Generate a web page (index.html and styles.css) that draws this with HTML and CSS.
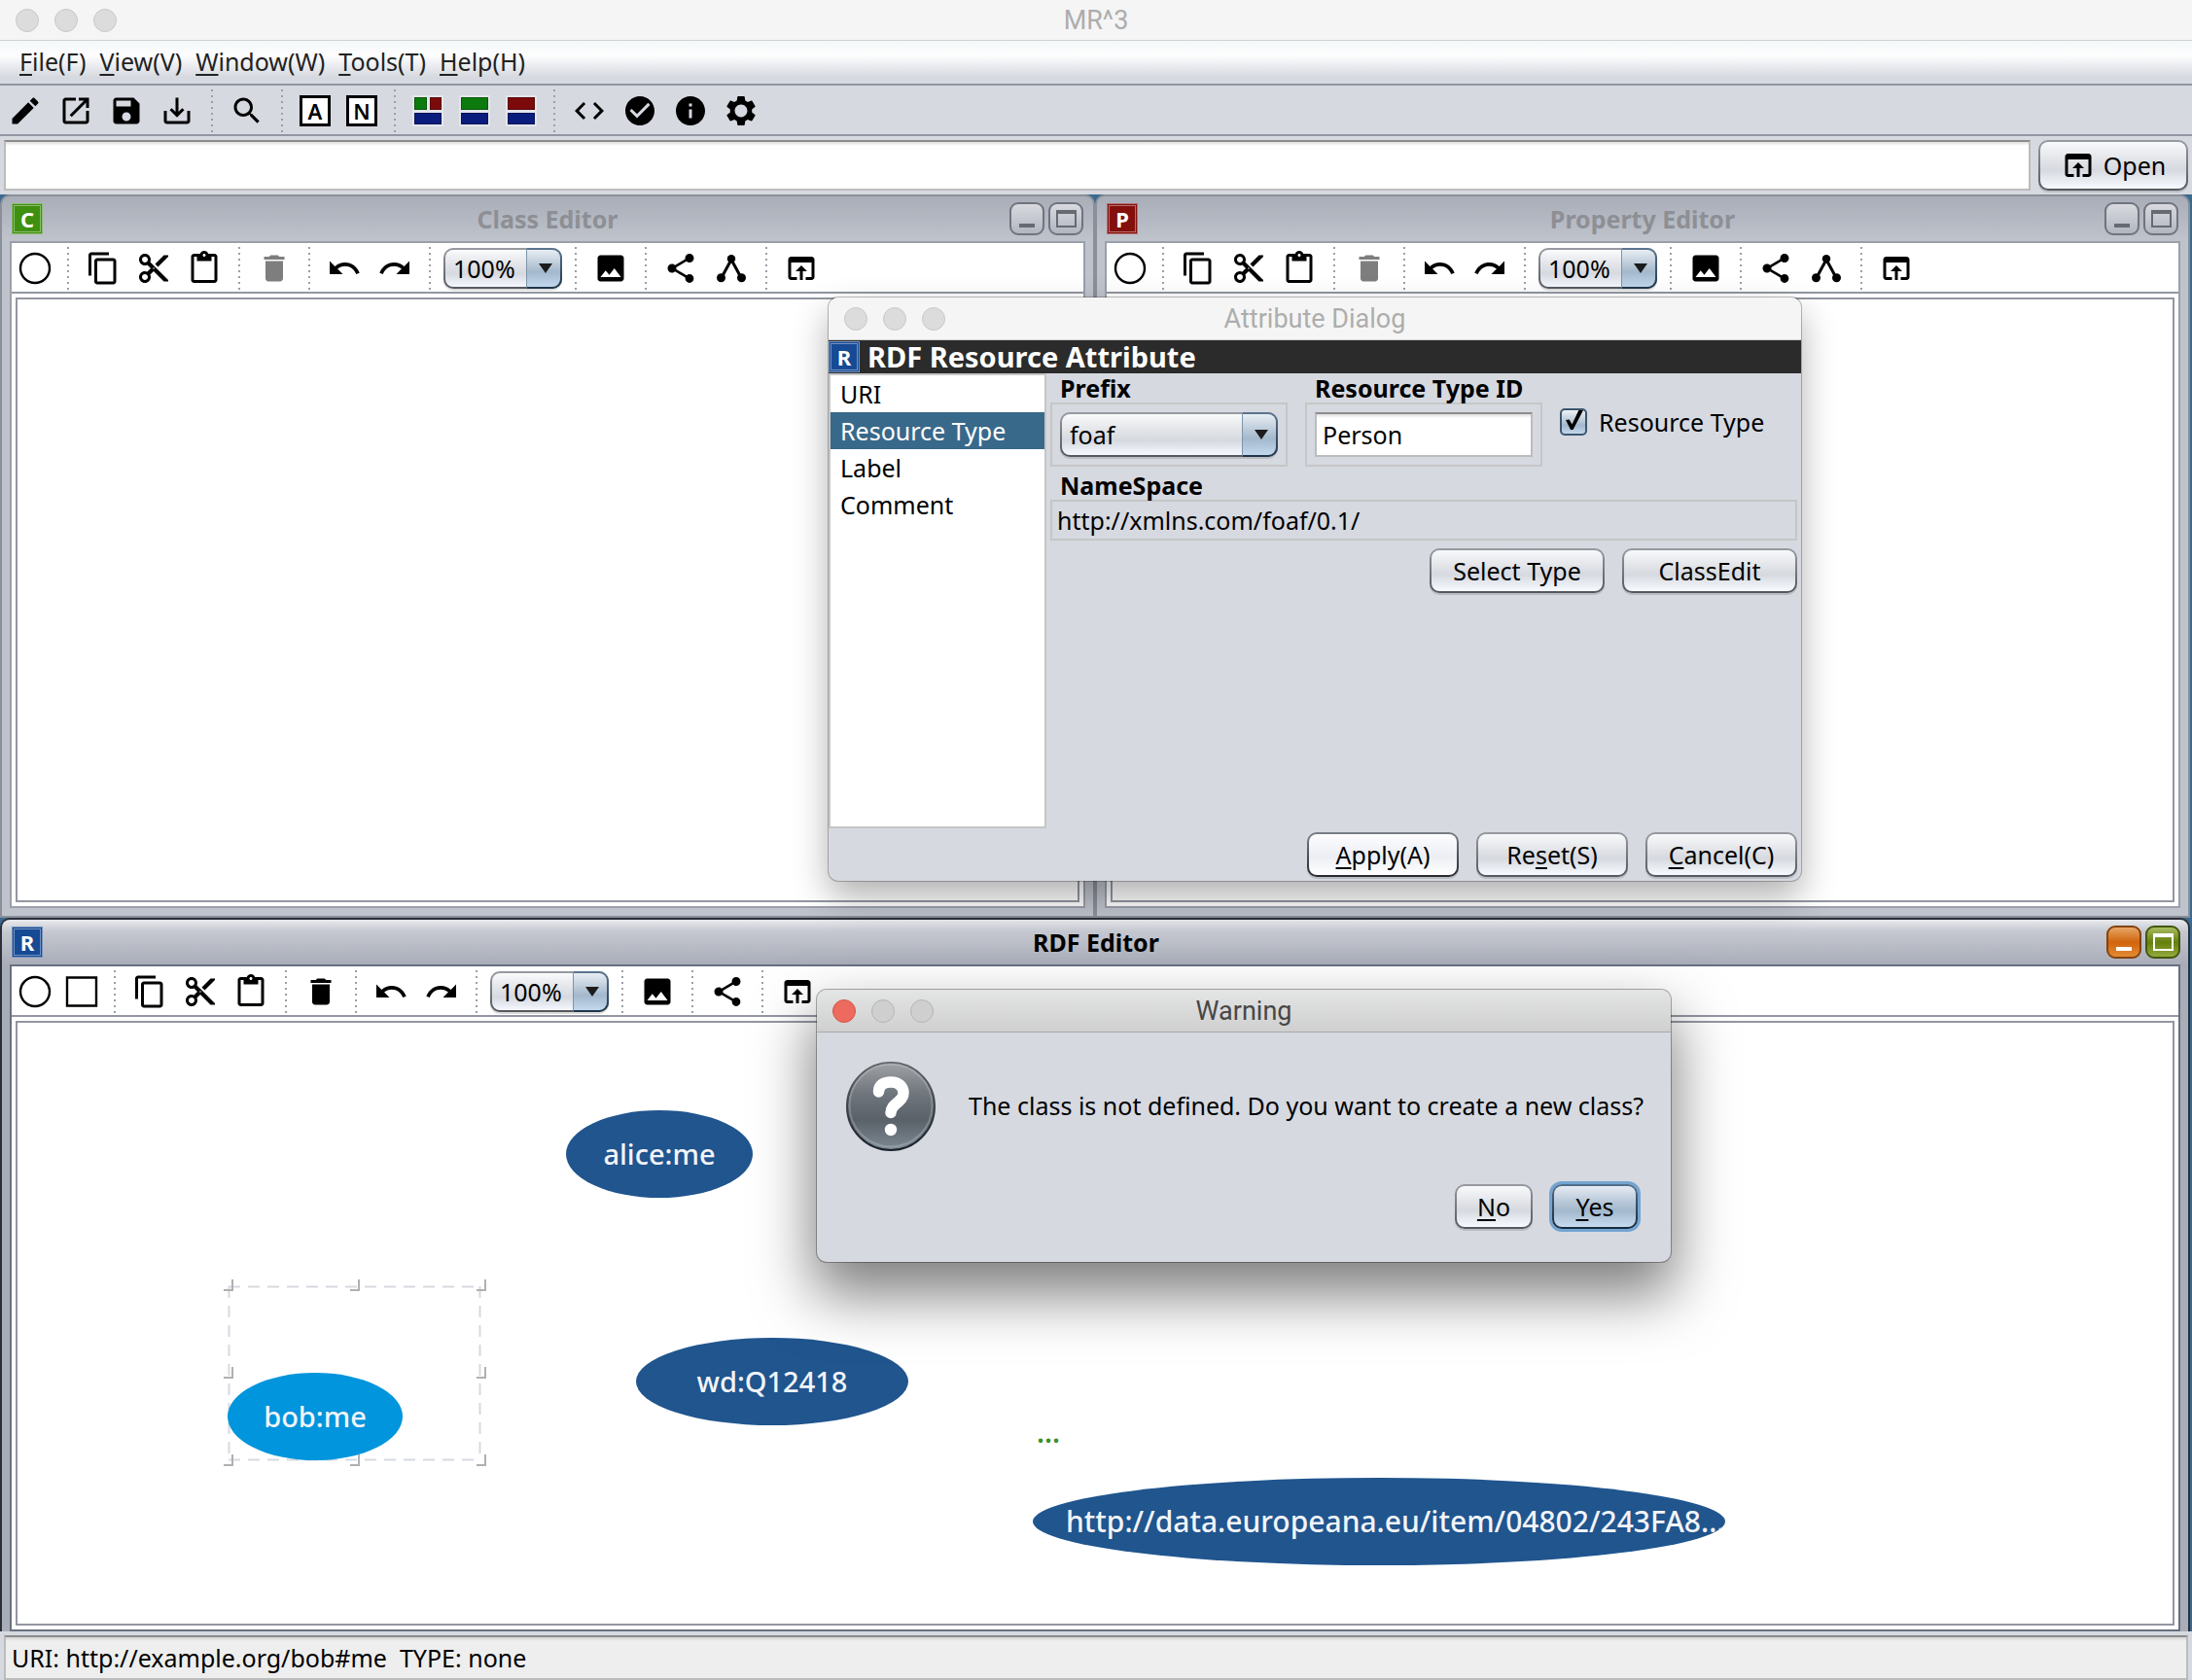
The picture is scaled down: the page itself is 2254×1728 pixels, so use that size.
FILE: index.html
```html
<!DOCTYPE html>
<html lang="en">
<head>
<meta charset="utf-8">
<title>MR^3</title>
<link rel="stylesheet" href="styles.css">
</head>
<body>
<svg class="sprite" aria-hidden="true">
  <symbol id="i-edit" viewBox="0 0 24 24"><path d="M3 17.25V21h3.75L17.81 9.94l-3.75-3.75L3 17.25zM20.71 7.04c.39-.39.39-1.02 0-1.41l-2.34-2.34c-.39-.39-1.02-.39-1.41 0l-1.83 1.83 3.75 3.75 1.83-1.83z"/></symbol>
  <symbol id="i-launch" viewBox="0 0 24 24"><path d="M19 19H5V5h7V3H5c-1.11 0-2 .9-2 2v14c0 1.1.89 2 2 2h14c1.1 0 2-.9 2-2v-7h-2v7zM14 3v2h3.59l-9.83 9.83 1.41 1.41L19 6.41V10h2V3h-7z"/></symbol>
  <symbol id="i-save" viewBox="0 0 24 24"><path d="M17 3H5c-1.11 0-2 .9-2 2v14c0 1.1.89 2 2 2h14c1.1 0 2-.9 2-2V7l-4-4zm-5 16c-1.66 0-3-1.34-3-3s1.34-3 3-3 3 1.34 3 3-1.34 3-3 3zm3-10H5V5h10v4z"/></symbol>
  <symbol id="i-export" viewBox="0 0 24 24"><path d="M19 12v7H5v-7H3v7c0 1.1.9 2 2 2h14c1.1 0 2-.9 2-2v-7h-2zm-6 .67l2.59-2.58L17 11.5l-5 5-5-5 1.41-1.41L11 12.67V3h2z"/></symbol>
  <symbol id="i-search" viewBox="0 0 24 24"><path d="M15.5 14h-.79l-.28-.27C15.41 12.59 16 11.11 16 9.5 16 5.91 13.09 3 9.5 3S3 5.91 3 9.5 5.91 16 9.5 16c1.61 0 3.09-.59 4.23-1.57l.27.28v.79l5 4.99L20.49 19l-4.99-5zm-6 0C7.01 14 5 11.99 5 9.5S7.01 5 9.5 5 14 7.01 14 9.5 11.99 14 9.5 14z"/></symbol>
  <symbol id="i-code" viewBox="0 0 24 24"><path d="M9.4 16.6L4.8 12l4.6-4.6L8 6l-6 6 6 6 1.4-1.4zm5.2 0l4.6-4.6-4.6-4.6L16 6l6 6-6 6-1.4-1.4z"/></symbol>
  <symbol id="i-check" viewBox="0 0 24 24"><path d="M12 2C6.48 2 2 6.48 2 12s4.48 10 10 10 10-4.48 10-10S17.52 2 12 2zm-2 15l-5-5 1.41-1.41L10 14.17l7.59-7.59L19 8l-9 9z"/></symbol>
  <symbol id="i-info" viewBox="0 0 24 24"><path d="M12 2C6.48 2 2 6.48 2 12s4.48 10 10 10 10-4.48 10-10S17.52 2 12 2zm1 15h-2v-6h2v6zm0-8h-2V7h2v2z"/></symbol>
  <symbol id="i-gear" viewBox="0 0 24 24"><path d="M19.43 12.98c.04-.32.07-.64.07-.98s-.03-.66-.07-.98l2.11-1.65c.19-.15.24-.42.12-.64l-2-3.46c-.12-.22-.39-.3-.61-.22l-2.49 1c-.52-.4-1.08-.73-1.69-.98l-.38-2.65C14.46 2.18 14.25 2 14 2h-4c-.25 0-.46.18-.49.42l-.38 2.65c-.61.25-1.17.59-1.69.98l-2.49-1c-.23-.09-.49 0-.61.22l-2 3.46c-.13.22-.07.49.12.64l2.11 1.65c-.04.32-.07.65-.07.98s.03.66.07.98l-2.11 1.65c-.19.15-.24.42-.12.64l2 3.46c.12.22.39.3.61.22l2.49-1c.52.4 1.08.73 1.69.98l.38 2.65c.03.24.24.42.49.42h4c.25 0 .46-.18.49-.42l.38-2.65c.61-.25 1.17-.59 1.69-.98l2.49 1c.23.09.49 0 .61-.22l2-3.46c.12-.22.07-.49-.12-.64l-2.11-1.65zM12 16.300c-2.370 0-4.300-1.930-4.300-4.300s1.930-4.300 4.300-4.300 4.300 1.930 4.300 4.300-1.930 4.300-4.300 4.300z"/></symbol>
  <symbol id="i-circle" viewBox="0 0 36 36"><circle cx="18" cy="18" r="15" fill="#fff" stroke="#000" stroke-width="2.4"/></symbol>
  <symbol id="i-square" viewBox="0 0 36 36"><path d="M3 3.500h30v29H3z" fill="#fff" stroke="#000" stroke-width="2.4"/></symbol>
  <symbol id="i-copy" viewBox="0 0 24 24"><path d="M16 1H4c-1.1 0-2 .9-2 2v14h2V3h12V1zm3 4H8c-1.1 0-2 .9-2 2v14c0 1.1.9 2 2 2h11c1.100 0 2-.9 2-2V7c0-1.100-.9-2-2-2zm0 16H8V7h11v14z"/></symbol>
  <symbol id="i-cut" viewBox="0 0 24 24"><path d="M9.64 7.64c.23-.5.36-1.05.36-1.64 0-2.21-1.79-4-4-4S2 3.79 2 6s1.79 4 4 4c.59 0 1.140-.13 1.640-.36L10 12l-2.360 2.360C7.140 14.130 6.590 14 6 14c-2.210 0-4 1.790-4 4s1.790 4 4 4 4-1.790 4-4c0-.59-.13-1.140-.36-1.640L12 14l7 7h3v-1L9.640 7.640zM6 8c-1.100 0-2-.89-2-2s.9-2 2-2 2 .89 2 2-.9 2-2 2zm0 12c-1.100 0-2-.89-2-2s.9-2 2-2 2 .89 2 2-.9 2-2 2zm6-7.500c-.28 0-.5-.22-.5-.5s.22-.5.5-.5.5.22.5.5-.22.5-.5.5zM19 3l-6 6 2 2 7-7V3z"/></symbol>
  <symbol id="i-paste" viewBox="0 0 24 24"><path d="M19 2h-4.180C14.400.84 13.300 0 12 0c-1.300 0-2.400.84-2.820 2H5c-1.100 0-2 .9-2 2v16c0 1.100.9 2 2 2h14c1.100 0 2-.9 2-2V4c0-1.100-.9-2-2-2zm-7 0c.55 0 1 .45 1 1s-.45 1-1 1-1-.45-1-1 .45-1 1-1zm7 18H5V4h2v3h10V4h2v16z"/></symbol>
  <symbol id="i-trash" viewBox="0 0 24 24"><path d="M6 19c0 1.100.9 2 2 2h8c1.100 0 2-.9 2-2V7H6v12zM19 4h-3.500l-1-1h-5l-1 1H5v2h14V4z"/></symbol>
  <symbol id="i-undo" viewBox="0 0 24 24"><path d="M12.500 8c-2.650 0-5.050.99-6.900 2.600L2 7v9h9l-3.620-3.620c1.390-1.160 3.160-1.880 5.120-1.880 3.540 0 6.550 2.310 7.600 5.500l2.370-.78C21.080 11.030 17.150 8 12.500 8z"/></symbol>
  <symbol id="i-redo" viewBox="0 0 24 24"><path d="M18.400 10.600C16.550 8.990 14.150 8 11.500 8c-4.650 0-8.580 3.030-9.960 7.220L3.900 16c1.050-3.190 4.050-5.500 7.600-5.500 1.950 0 3.730.72 5.120 1.880L13 16h9V7l-3.600 3.600z"/></symbol>
  <symbol id="i-image" viewBox="0 0 24 24"><path d="M21 19V5c0-1.100-.9-2-2-2H5c-1.100 0-2 .9-2 2v14c0 1.100.9 2 2 2h14c1.100 0 2-.9 2-2zM8.500 13.500l2.500 3.010L14.500 12l4.500 6H5l3.500-4.500z"/></symbol>
  <symbol id="i-share" viewBox="0 0 24 24"><path d="M18 16.080c-.76 0-1.440.3-1.960.77L8.910 12.700c.05-.23.09-.46.09-.7s-.04-.47-.09-.7l7.050-4.110c.54.5 1.250.81 2.040.81 1.660 0 3-1.340 3-3s-1.340-3-3-3-3 1.340-3 3c0 .24.04.47.09.7L8.040 9.810C7.500 9.310 6.790 9 6 9c-1.660 0-3 1.340-3 3s1.340 3 3 3c.79 0 1.500-.31 2.040-.81l7.120 4.160c-.05.21-.08.43-.08.65 0 1.610 1.310 2.920 2.920 2.920 1.610 0 2.920-1.310 2.920-2.920s-1.310-2.920-2.920-2.920z"/></symbol>
  <symbol id="i-tree" viewBox="0 0 24 24"><path d="M12 6 5.500 18M12 6l6.500 12" stroke="#000" stroke-width="2"/><circle cx="12" cy="5.500" r="2.800"/><circle cx="5" cy="18.500" r="3"/><circle cx="19" cy="18.500" r="3"/></symbol>
  <symbol id="i-browser" viewBox="0 0 24 24"><path d="M19 4H5c-1.110 0-2 .9-2 2v12c0 1.100.89 2 2 2h4v-2H5V8h14v10h-4v2h4c1.100 0 2-.9 2-2V6c0-1.100-.89-2-2-2zm-7 6l-4 4h3v6h2v-6h3l-4-4z"/></symbol>
  <symbol id="i-min" viewBox="0 0 36 34"><path d="M10 22h16v4H10z"/></symbol>
  <symbol id="i-max" viewBox="0 0 36 34"><path d="M8 8h21v18H8zm2 4v12h17V12z" fill-rule="evenodd"/></symbol>
</svg>

<header class="titlebar">
  <div class="lights"><i></i><i></i><i></i></div>
  <h1 class="titlebar-text">MR^3</h1>
</header>

<nav class="menubar" aria-label="Main menu">
  <button class="menu"><u>F</u>ile(F)</button>
  <button class="menu"><u>V</u>iew(V)</button>
  <button class="menu"><u>W</u>indow(W)</button>
  <button class="menu"><u>T</u>ools(T)</button>
  <button class="menu"><u>H</u>elp(H)</button>
</nav>

<div class="toolbar toolbar-main" role="toolbar" aria-label="Main tools">
  <button class="tool" aria-label="New"><svg><use href="#i-edit"/></svg></button>
  <button class="tool" aria-label="Open"><svg><use href="#i-launch"/></svg></button>
  <button class="tool" aria-label="Save"><svg><use href="#i-save"/></svg></button>
  <button class="tool" aria-label="Export"><svg><use href="#i-export"/></svg></button>
  <span class="sep"></span>
  <button class="tool" aria-label="Find"><svg><use href="#i-search"/></svg></button>
  <span class="sep"></span>
  <button class="tool tool-narrow"><span class="letter">A</span></button>
  <button class="tool tool-narrow"><span class="letter">N</span></button>
  <span class="sep"></span>
  <button class="tool tool-narrow" aria-label="All editors"><span class="layout"><i class="g"></i><i class="r"></i><i class="b wide"></i></span></button>
  <button class="tool tool-narrow" aria-label="Class and RDF editors"><span class="layout"><i class="g wide"></i><i class="b wide"></i></span></button>
  <button class="tool tool-narrow" aria-label="Property and RDF editors"><span class="layout"><i class="r wide"></i><i class="b wide"></i></span></button>
  <span class="sep"></span>
  <button class="tool" aria-label="Source"><svg><use href="#i-code"/></svg></button>
  <button class="tool" aria-label="Validate"><svg><use href="#i-check"/></svg></button>
  <button class="tool" aria-label="Info"><svg><use href="#i-info"/></svg></button>
  <button class="tool" aria-label="Settings"><svg><use href="#i-gear"/></svg></button>
</div>

<form class="address">
  <input class="field address-input" type="text" aria-label="Address">
  <button class="btn btn-open" type="button"><svg class="icon"><use href="#i-browser"/></svg>Open</button>
</form>

<main class="desktop">
  <section class="frame">
    <header class="frame-title">
      <span class="badge badge-c">C</span>
      <h2 class="frame-name">Class Editor</h2>
      <div class="winbtns">
        <button class="winbtn" aria-label="Minimize"><svg><use href="#i-min"/></svg></button>
        <button class="winbtn" aria-label="Maximize"><svg><use href="#i-max"/></svg></button>
      </div>
    </header>
    <div class="frame-body">
      <div class="toolbar" role="toolbar" aria-label="Class tools">
        <button class="tool tool-narrow" aria-label="Insert class"><svg><use href="#i-circle"/></svg></button>
        <span class="sep"></span>
        <button class="tool" aria-label="Copy"><svg><use href="#i-copy"/></svg></button>
        <button class="tool" aria-label="Cut"><svg><use href="#i-cut"/></svg></button>
        <button class="tool" aria-label="Paste"><svg><use href="#i-paste"/></svg></button>
        <span class="sep"></span>
        <button class="tool" aria-label="Delete" disabled><svg><use href="#i-trash"/></svg></button>
        <span class="sep"></span>
        <button class="tool" aria-label="Undo"><svg><use href="#i-undo"/></svg></button>
        <button class="tool" aria-label="Redo"><svg><use href="#i-redo"/></svg></button>
        <span class="sep"></span>
        <span class="combo combo-zoom"><select aria-label="Zoom"><option>100%</option></select></span>
        <span class="sep"></span>
        <button class="tool" aria-label="Save image"><svg><use href="#i-image"/></svg></button>
        <span class="sep"></span>
        <button class="tool" aria-label="Layout left to right"><svg><use href="#i-share"/></svg></button>
        <button class="tool" aria-label="Layout top to bottom"><svg><use href="#i-tree"/></svg></button>
        <span class="sep"></span>
        <button class="tool" aria-label="Show attributes"><svg><use href="#i-browser"/></svg></button>
      </div>
      <div class="canvas"></div>
    </div>
  </section>

  <section class="frame">
    <header class="frame-title">
      <span class="badge badge-p">P</span>
      <h2 class="frame-name">Property Editor</h2>
      <div class="winbtns">
        <button class="winbtn" aria-label="Minimize"><svg><use href="#i-min"/></svg></button>
        <button class="winbtn" aria-label="Maximize"><svg><use href="#i-max"/></svg></button>
      </div>
    </header>
    <div class="frame-body">
      <div class="toolbar" role="toolbar" aria-label="Property tools">
        <button class="tool tool-narrow" aria-label="Insert property"><svg><use href="#i-circle"/></svg></button>
        <span class="sep"></span>
        <button class="tool" aria-label="Copy"><svg><use href="#i-copy"/></svg></button>
        <button class="tool" aria-label="Cut"><svg><use href="#i-cut"/></svg></button>
        <button class="tool" aria-label="Paste"><svg><use href="#i-paste"/></svg></button>
        <span class="sep"></span>
        <button class="tool" aria-label="Delete" disabled><svg><use href="#i-trash"/></svg></button>
        <span class="sep"></span>
        <button class="tool" aria-label="Undo"><svg><use href="#i-undo"/></svg></button>
        <button class="tool" aria-label="Redo"><svg><use href="#i-redo"/></svg></button>
        <span class="sep"></span>
        <span class="combo combo-zoom"><select aria-label="Zoom"><option>100%</option></select></span>
        <span class="sep"></span>
        <button class="tool" aria-label="Save image"><svg><use href="#i-image"/></svg></button>
        <span class="sep"></span>
        <button class="tool" aria-label="Layout left to right"><svg><use href="#i-share"/></svg></button>
        <button class="tool" aria-label="Layout top to bottom"><svg><use href="#i-tree"/></svg></button>
        <span class="sep"></span>
        <button class="tool" aria-label="Show attributes"><svg><use href="#i-browser"/></svg></button>
      </div>
      <div class="canvas"></div>
    </div>
  </section>

  <section class="frame frame-active">
    <header class="frame-title">
      <span class="badge badge-r">R</span>
      <h2 class="frame-name">RDF Editor</h2>
      <div class="winbtns">
        <button class="winbtn winbtn-orange" aria-label="Minimize"><svg><use href="#i-min"/></svg></button>
        <button class="winbtn winbtn-green" aria-label="Maximize"><svg><use href="#i-max"/></svg></button>
      </div>
    </header>
    <div class="frame-body">
      <div class="toolbar" role="toolbar" aria-label="RDF tools">
        <button class="tool tool-narrow" aria-label="Insert resource"><svg><use href="#i-circle"/></svg></button>
        <button class="tool tool-narrow" aria-label="Insert literal"><svg><use href="#i-square"/></svg></button>
        <span class="sep"></span>
        <button class="tool" aria-label="Copy"><svg><use href="#i-copy"/></svg></button>
        <button class="tool" aria-label="Cut"><svg><use href="#i-cut"/></svg></button>
        <button class="tool" aria-label="Paste"><svg><use href="#i-paste"/></svg></button>
        <span class="sep"></span>
        <button class="tool" aria-label="Delete"><svg><use href="#i-trash"/></svg></button>
        <span class="sep"></span>
        <button class="tool" aria-label="Undo"><svg><use href="#i-undo"/></svg></button>
        <button class="tool" aria-label="Redo"><svg><use href="#i-redo"/></svg></button>
        <span class="sep"></span>
        <span class="combo combo-zoom"><select aria-label="Zoom"><option>100%</option></select></span>
        <span class="sep"></span>
        <button class="tool" aria-label="Save image"><svg><use href="#i-image"/></svg></button>
        <span class="sep"></span>
        <button class="tool" aria-label="Layout left to right"><svg><use href="#i-share"/></svg></button>
        <span class="sep"></span>
        <button class="tool" aria-label="Show attributes"><svg><use href="#i-browser"/></svg></button>
      </div>
      <div class="canvas">
        <svg class="selection" viewBox="0 0 270 192" aria-hidden="true">
          <path d="M5 7.500h259M5 185.500h259M5.500 7v179M263.500 7v179" stroke="#d6d9e0" stroke-width="2" stroke-dasharray="12 8" fill="none"/>
          <path d="M0 11h9V0M130 11h9V0M260 11h9V0M0 101h9V90M260 101h9V90M0 191h9v-11M260 191h9v-11" stroke="#b0b0b0" stroke-width="2" fill="none"/>
        </svg>
        <div class="node node-alice">alice:me</div>
        <div class="node node-wd">wd:Q12418</div>
        <div class="node node-bob">bob:me</div>
        <svg class="handle" viewBox="0 0 10 12" aria-hidden="true"><path d="M0 11h9V0" stroke="#b0b0b0" stroke-width="2" fill="none"/></svg>
        <div class="node node-item">http://data.europeana.eu/item/04802/243FA8...</div>
        <div class="edge-label">...</div>
      </div>
    </div>
  </section>
</main>

<footer class="statusbar"><output class="status">URI: http://example.org/bob#me&nbsp; TYPE: none</output></footer>

<section class="dialog dialog-attr" role="dialog" aria-label="Attribute Dialog">
  <header class="titlebar">
    <div class="lights"><i></i><i></i><i></i></div>
    <h2 class="titlebar-text">Attribute Dialog</h2>
  </header>
  <h3 class="banner"><span class="badge badge-r">R</span>RDF Resource Attribute</h3>
  <div class="attr-main">
    <ul class="attr-list">
      <li>URI</li>
      <li class="selected">Resource Type</li>
      <li>Label</li>
      <li>Comment</li>
    </ul>
    <form class="attr-form">
      <div class="attr-row">
        <div class="group">
          <label class="caption" for="prefix">Prefix</label>
          <div class="box"><span class="combo"><select id="prefix"><option>foaf</option></select></span></div>
        </div>
        <div class="group">
          <label class="caption" for="type-id">Resource Type ID</label>
          <div class="box"><input class="field" id="type-id" type="text" value="Person"></div>
        </div>
        <label class="check"><input type="checkbox" checked>Resource Type</label>
      </div>
      <div class="group">
        <span class="caption" id="ns-caption">NameSpace</span>
        <output class="namespace" aria-labelledby="ns-caption">http://xmlns.com/foaf/0.1/</output>
      </div>
      <div class="buttons">
        <button class="btn btn-wide" type="button">Select Type</button>
        <button class="btn btn-wide" type="button">ClassEdit</button>
      </div>
    </form>
  </div>
  <footer class="buttons attr-footer">
    <button class="btn btn-mid btn-hot"><span><u>A</u>pply(A)</span></button>
    <button class="btn btn-mid"><span>Re<u>s</u>et(S)</span></button>
    <button class="btn btn-mid"><span><u>C</u>ancel(C)</span></button>
  </footer>
</section>

<section class="dialog dialog-warn" role="alertdialog" aria-label="Warning">
  <header class="titlebar">
    <div class="lights"><i class="red"></i><i></i><i></i></div>
    <h2 class="titlebar-text">Warning</h2>
  </header>
  <div class="message">
    <svg class="question" viewBox="0 0 92 92" aria-hidden="true">
      <defs><linearGradient id="ball" x1="0" y1="0" x2="0" y2="1"><stop offset="0" stop-color="#a0a2a6"/><stop offset=".35" stop-color="#70767d"/><stop offset=".65" stop-color="#5a6168"/><stop offset="1" stop-color="#7d8993"/></linearGradient>
      <linearGradient id="rim" x1="0" y1="0" x2="0" y2="1"><stop offset="0" stop-color="#63666b"/><stop offset="1" stop-color="#18202a"/></linearGradient></defs>
      <circle cx="46" cy="46" r="45" fill="url(#ball)" stroke="url(#rim)" stroke-width="2"/>
      <circle cx="46" cy="45" r="42.500" fill="none" stroke="#fff" stroke-opacity=".2" stroke-width="2"/>
      <path d="M33.500 31c0-7 5-10 12.500-10s13 4 13 11.500c0 9-13 10.500-13 20" fill="none" stroke="#fff" stroke-width="11.500" stroke-linecap="round"/>
      <circle cx="46" cy="70" r="6.200" fill="#fff"/>
    </svg>
    <p>The class is not defined. Do you want to create a new class?</p>
  </div>
  <footer class="buttons warn-footer">
    <button class="btn btn-no"><span><u>N</u>o</span></button>
    <button class="btn btn-yes"><span><u>Y</u>es</span></button>
  </footer>
</section>
</body>
</html>
```

FILE: styles.css
```css
* { box-sizing: border-box; }

:root {
  --panel: #d6d9e0;
  --line: #9297a1;
  --ui: "Noto Sans", "Open Sans", sans-serif;
  --title: Roboto, Inter, sans-serif;
}

body {
  margin: 0;
  height: 100vh;
  display: flex;
  flex-direction: column;
  position: relative;
  overflow: hidden;
  background: var(--panel);
  color: #000;
  font: 25px/32px var(--ui);
}

h1, h2, h3, p, ul { margin: 0; padding: 0; }
ul { list-style: none; }
button, input, select { font: inherit; color: inherit; margin: 0; }
button { padding: 0; border: 0; background: none; }
u { text-underline-offset: 3px; text-decoration-thickness: 2px; }
svg { display: block; }
.sprite { position: absolute; width: 0; height: 0; }

/* macOS title bars */
.titlebar {
  flex: none;
  display: grid;
  grid-template-columns: 1fr auto 1fr;
  align-items: center;
  height: 42px;
  padding: 0 16px;
  background: #f5f5f5;
  border-bottom: 1px solid #cfcfcf;
}
.titlebar-text { font: 27px/32px var(--title); color: #adadad; }
.lights { display: flex; gap: 16px; }
.lights i { width: 24px; height: 24px; border-radius: 50%; background: #dcdcdc; border: 1px solid #c8c8c8; }
.lights .red { background: #ed6a5e; border-color: #d35549; }

.menubar {
  flex: none;
  display: flex;
  gap: 14px;
  height: 46px;
  padding: 0 20px 2px;
  border-bottom: 2px solid var(--line);
  background: linear-gradient(#f4f8f8, #fdfdfe 35%, #d6d9e0 85%);
}
.menu { color: #222; }

/* tool bars */
.toolbar {
  flex: none;
  display: flex;
  align-items: center;
  height: 52px;
  padding-top: 2px;
  border-bottom: 2px solid var(--line);
  background: #fff;
}
.toolbar-main { background: var(--panel); }
.tool { flex: none; width: 52px; height: 48px; display: flex; align-items: center; justify-content: center; }
.tool-narrow { width: 48px; }
.tool svg { width: 36px; height: 36px; }
.tool:disabled svg { opacity: .5; }
.sep {
  flex: none;
  width: 20px;
  height: 44px;
  background: repeating-linear-gradient(#9a9fa9 0 2px, transparent 2px 6px) center / 2px 100% no-repeat;
}
.letter {
  width: 32px;
  height: 32px;
  border: 3px solid #000;
  background: #fff;
  font: 600 22px/26px var(--ui);
  text-align: center;
}
.layout { width: 32px; height: 32px; display: grid; grid-template-columns: 1fr 1fr; gap: 3px; padding: 2px; background: #e4e6ec; }
.layout i { background: #0c7a0c; box-shadow: inset 0 0 0 1px #0004; }
.layout .r { background: #7c0a0a; }
.layout .b { background: #0a1c7c; }
.layout .wide { grid-column: span 2; }

/* form controls */
.field {
  border: 2px solid #bcbcbc;
  border-top-color: #8c8c8c;
  background: linear-gradient(#dedede, #fff 4px);
  border-radius: 0;
  padding: 0 6px;
  outline: 0;
}
.btn {
  display: flex;
  align-items: center;
  justify-content: center;
  height: 46px;
  border: 2px solid transparent;
  border-radius: 10px;
  background:
    linear-gradient(#f8f9fb, #e4e6ea 35%, #d6d9df 60%, #f7faff) padding-box,
    linear-gradient(#979aa1, #54575d) border-box;
  box-shadow: 0 2px 0 #00000022;
}
.btn-wide { width: 180px; }
.btn-mid { width: 156px; }
.btn-no { width: 80px; }
.btn-hot {
  background:
    linear-gradient(#fdfdff, #eceef3 55%, #fff) padding-box,
    linear-gradient(#7a7e86, #25282e) border-box;
}
.btn-yes {
  width: 88px;
  background:
    linear-gradient(#e6ecf4, #bccbdb 35%, #a3b8cc 60%, #c6dbf0) padding-box,
    linear-gradient(#52708c, #16293c) border-box;
  box-shadow: 0 0 0 3px #73a4d1;
}
.combo { display: block; position: relative; height: 46px; }
.combo select {
  appearance: none;
  width: 100%;
  height: 100%;
  padding: 0 8px;
  outline: 0;
  border: 2px solid transparent;
  border-radius: 10px;
  background:
    linear-gradient(#fafbfc, #e4e6ea 35%, #d6d9df 65%, #f5f8ff) padding-box,
    linear-gradient(#979aa1, #54575d) border-box;
  box-shadow: 0 2px 0 #00000022;
}
.combo::before {
  content: "";
  position: absolute;
  top: 0;
  right: 0;
  bottom: 0;
  width: 34px;
  border: 2px solid transparent;
  border-left: 1px solid #7d94aa;
  border-radius: 0 10px 10px 0;
  background:
    linear-gradient(#e8eef4, #bac9d8 40%, #a3b8cc 60%, #c2d8ec) padding-box,
    linear-gradient(#5c7590, #1f3549) border-box;
  pointer-events: none;
}
.combo::after {
  content: "";
  position: absolute;
  top: 18px;
  right: 10px;
  width: 14px;
  height: 10px;
  background: #1c1c1c;
  clip-path: polygon(0 0, 100% 0, 50% 100%);
  pointer-events: none;
}
.combo-zoom { flex: none; width: 122px; height: 42px; margin: 0 4px; }
.combo-zoom::after { top: 16px; }

.address { flex: none; display: flex; gap: 8px; padding: 4px; height: 60px; }
.address-input { flex: 1; height: 52px; }
.btn-open { width: 154px; height: 52px; gap: 8px; }
.icon { width: 36px; height: 36px; }

/* internal frames */
.desktop {
  flex: 1;
  min-height: 0;
  display: grid;
  grid-template-columns: 1fr 1fr;
  grid-template-rows: 744fr 734fr;
  padding-right: 2px;
  background: #3b6a90;
}
.frame {
  min-width: 0;
  min-height: 0;
  display: flex;
  flex-direction: column;
  padding: 0 8px 8px;
  border: 2px solid #8a8f9a;
  border-radius: 10px 10px 0 0;
  background: linear-gradient(#a9adb7, #bfc3cc 46px);
}
.frame-active {
  grid-column: span 2;
  padding-bottom: 0;
  border-color: #2a2f38;
  border-bottom: 0;
  background: linear-gradient(#e8eaed, #c5c8d0 12px, #a9adb8 46px);
}
.frame-title {
  flex: none;
  display: grid;
  grid-template-columns: 1fr auto 1fr;
  align-items: center;
  height: 46px;
  padding: 0 2px;
}
.frame-active .frame-title { padding-right: 0; }
.frame-name { font: 700 25px/32px var(--ui); color: #8d8f94; }
.frame-active .frame-name { color: #000; }
.badge {
  flex: none;
  width: 32px;
  height: 32px;
  border: 3px double #ffffff66;
  color: #fff;
  font: 700 22px/26px var(--ui);
  text-align: center;
}
.badge-c { background: #3f8f10; }
.badge-p { background: #84100c; }
.badge-r { background: #164a94; }
.winbtns { display: flex; gap: 4px; justify-content: flex-end; }
.winbtn {
  flex: none;
  width: 36px;
  height: 34px;
  border: 2px solid #6f747f;
  border-radius: 9px;
  background: linear-gradient(#d8dadf, #b2b6c0);
}
.winbtn svg { width: 36px; height: 34px; margin: -2px; fill: #666a73; }
.winbtn-orange { background: linear-gradient(#e8a766, #d0640c 50%, #e58b34); border-color: #84420c; }
.winbtn-green { background: linear-gradient(#a9bd62, #647f0c 50%, #93a93c); border-color: #44560c; }
.winbtn-orange svg, .winbtn-green svg { fill: #fff; }

.frame-body {
  flex: 1;
  min-height: 0;
  display: flex;
  flex-direction: column;
  border: 2px solid #9a9faa;
  background: #fff;
}
.frame-active .frame-body { border-color: #697080; }
.canvas { flex: 1; min-height: 0; position: relative; margin: 4px; border: 2px solid var(--line); background: #fff; overflow: hidden; }

/* graph */
.node {
  position: absolute;
  height: 90px;
  border-radius: 50%;
  overflow: hidden;
  background: #20558e;
  color: #f2f4f8;
  font: 500 29px/90px var(--ui);
  text-align: center;
  white-space: nowrap;
}
.node-alice { left: 564px; top: 90px; width: 192px; }
.node-wd { left: 636px; top: 324px; width: 280px; }
.node-bob { left: 216px; top: 360px; width: 180px; background: #0095dc; }
.node-item { left: 1044px; top: 468px; width: 712px; padding-left: 34px; text-align: left; font-size: 30px; }
.edge-label { position: absolute; left: 1048px; top: 403px; color: #3f8f2c; font: 600 29px/36px var(--ui); }
.selection { position: absolute; left: 212px; top: 264px; width: 270px; height: 192px; }
.handle { position: absolute; left: 342px; top: 444px; width: 10px; height: 12px; }

.statusbar { flex: none; display: flex; padding: 4px 4px 0; }
.status {
  flex: 1;
  height: 46px;
  padding: 0 6px;
  border: 2px solid #bcbcbc;
  border-top-color: #8c8c8c;
  background: linear-gradient(#d4d4d4, #eee 4px);
  line-height: 42px;
}

/* dialogs */
.dialog {
  position: absolute;
  display: flex;
  flex-direction: column;
  border-radius: 10px;
  overflow: hidden;
  background: var(--panel);
}
.dialog .titlebar { height: 44px; }
.dialog-attr {
  left: 852px;
  top: 306px;
  width: 1000px;
  height: 600px;
  box-shadow: 0 0 0 1px #00000040, 0 16px 36px #00000050;
}
.banner {
  flex: none;
  display: flex;
  align-items: center;
  gap: 8px;
  height: 34px;
  background: #2b2b2b;
  color: #fff;
  font: 700 29px/34px var(--ui);
}
.attr-main { flex: 1; min-height: 0; display: flex; }
.attr-list { flex: none; width: 224px; height: 468px; border: 2px solid #c6c6c6; background: #fff; }
.attr-list li { padding: 0 10px; line-height: 38px; }
.attr-list .selected { background: #39698a; color: #fff; }
.attr-form { flex: 1; padding: 0 4px; }
.attr-row { display: flex; gap: 18px; margin-bottom: 4px; }
.caption { display: block; padding-left: 10px; font-weight: 700; line-height: 30px; }
.box { width: 244px; height: 66px; padding: 8px; border: 2px solid #c6c6c6; }
.box .field { display: block; width: 100%; height: 46px; }
.check { display: flex; align-items: center; gap: 12px; height: 32px; margin-top: 34px; }
.check input {
  appearance: none;
  width: 28px;
  height: 28px;
  border: 2px solid #3d566e;
  border-radius: 5px;
  background: linear-gradient(#eef2f6, #a3b8cc 65%, #c2d8ec);
}
.check input::before {
  content: "";
  display: block;
  width: 18px;
  height: 20px;
  margin-left: 4px;
  background: #000;
  clip-path: polygon(0 50%, 20% 47%, 36% 72%, 74% 0, 100% 0, 42% 100%, 28% 100%);
}
.namespace { display: block; height: 42px; padding: 0 5px; border: 2px solid #c6c6c6; line-height: 38px; }
.buttons { display: flex; justify-content: flex-end; gap: 18px; }
.attr-form .buttons { padding-top: 8px; }
.attr-footer { padding: 0 4px 4px; }

.dialog-warn {
  left: 840px;
  top: 1018px;
  width: 878px;
  height: 280px;
  box-shadow: 0 0 0 1px #00000050, 0 30px 60px 4px #00000080;
}
.dialog-warn .titlebar { background: linear-gradient(#e4e5e5, #cfcfcf); border-color: #a8a8ac; }
.dialog-warn .titlebar-text { color: #474747; }
.dialog-warn .lights i:not(.red) { background: #cfcfcf; border-color: #b4b4b4; }
.message { flex: 1; display: flex; align-items: flex-start; gap: 34px; padding: 30px 30px 0; white-space: nowrap; }
.question { flex: none; width: 92px; height: 92px; }
.message p { line-height: 90px; }
.warn-footer { padding: 0 34px 34px; gap: 20px; }
```
